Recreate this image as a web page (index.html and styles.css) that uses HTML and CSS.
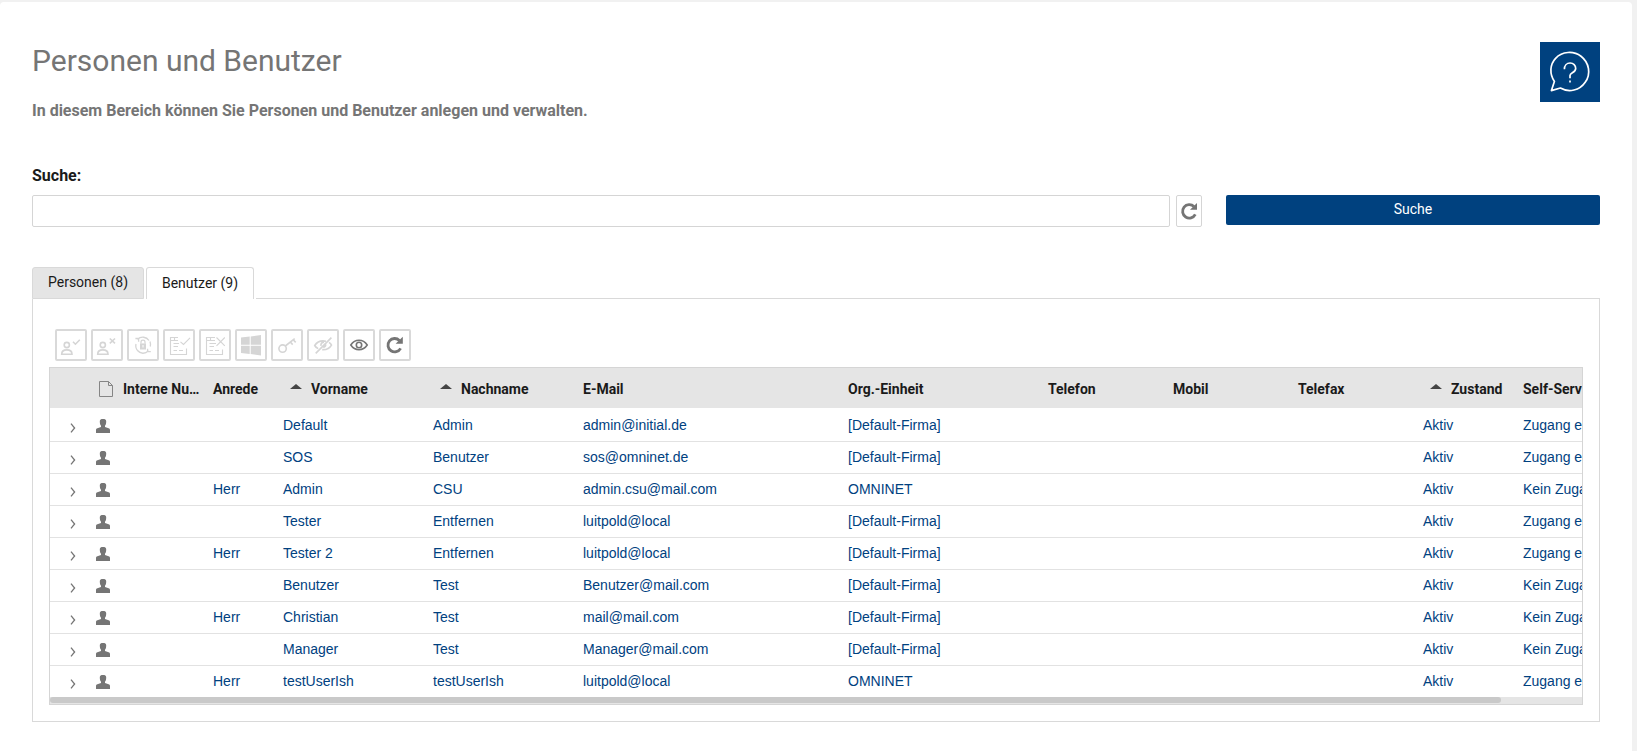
FILE: index.html
```
<!DOCTYPE html>
<html lang="de">
<head>
    <meta charset="UTF-8">
    <meta name="viewport" content="width=device-width, initial-scale=1.0">
    <title>Personen und Benutzer</title>
    <link rel="stylesheet" href="styles.css">
</head>
<body>
    <div class="page">
        <div class="header">
            <div class="intro">
                <h1>Personen und Benutzer</h1>
                <p>In diesem Bereich können Sie Personen und Benutzer anlegen und verwalten.</p>
            </div>
            <a class="help" title="Hilfe">
                <svg width="60" height="60" viewBox="0 0 60 60" fill="none" stroke="#fff" stroke-width="1.7">
                    <path d="M14.4 39.5C9.4 32 9.7 22.5 15.6 16.3C22.2 9.3 33.5 8.6 41 14.2C49.3 20.6 51.2 32 45.2 40.2C39.7 48.3 29 51 20.4 46L11.4 48.6Z" stroke-linejoin="round"/>
                    <path d="M24.4 27.2C24.4 23.5 26.8 21 30.1 21C33.4 21 35.7 23.5 35.7 26.4C35.7 30.6 30 30.7 30 33.4V36.3"/>
                    <path d="M30 38.4V40.6"/>
                </svg>
            </a>
        </div>

        <label class="search-label" for="search">Suche:</label>
        <div class="search">
            <input type="text" id="search">
            <button class="reset" id="reset">
                <svg width="24" height="30" viewBox="0 0 24 30"><path d="M17 10.6A6.7 6.7 0 1 0 18.3 18.4" fill="none" stroke="#757575" stroke-width="2.8"/><path d="M20 7V13.8H13Z" fill="#757575"/></svg>
            </button>
            <button class="submit">Suche</button>
        </div>

        <div class="tabs">
            <div class="tab">Personen (8)</div>
            <div class="tab active">Benutzer (9)</div>
            <div class="tab-line"></div>
        </div>
        <div class="panel">
            <div class="toolbar">
                <button disabled>
                    <svg viewBox="0 0 28 28"><circle cx="9.8" cy="14" r="2.6"/><path d="M4.7 23.2C4.7 19.8 7.2 18.9 9.8 18.9S15 19.8 15 23.2ZM16 10.8L18.4 13.2L22.8 8.8"/></svg>
                </button>
                <button disabled>
                    <svg viewBox="0 0 28 28"><circle cx="9.8" cy="14" r="2.6"/><path d="M4.7 23.2C4.7 19.8 7.2 18.9 9.8 18.9S15 19.8 15 23.2ZM16.8 7.5L22 12.3M22 7.5L16.8 12.3"/></svg>
                </button>
                <button disabled>
                    <svg viewBox="0 0 28 28"><path d="M8.5 8.5C12 5 17.5 5.7 20 9.5M7 13C6.4 15.5 7 18 9 20M19.5 19.8C16 23.2 11.5 23 8.5 19.5M21.3 15.5C21.8 13.5 21.5 12 21 10.5M6.4 7.5H9.6V10.7M21.8 20.6H18.6V17.8" stroke-width="1.3"/><path d="M12 12.4V11C12 8.5 16 8.5 16 11V12.4" stroke-width="1.2"/><path class="fill" d="M11 12.4H17V18.5H11Z"/><path d="M14 14V16.5" stroke="#fff" stroke-width="1"/></svg>
                </button>
                <button disabled>
                    <svg viewBox="0 0 28 28"><path d="M13 6.5H5.5V23.5H21.5V17.5M5.5 9.5H13M9.5 6.5V9.5M8.5 12.5H14M8.5 15.5H13M8.5 19.5H12M14 19.5H18" stroke-width="1.1"/><path d="M15.5 10.8L18.5 13.5L25 6.8" stroke-width="1.1"/></svg>
                </button>
                <button disabled>
                    <svg viewBox="0 0 28 28"><path d="M14 6.5H5.5V23.5H21.5V18.5M5.5 9.5H14M9.5 6.5V9.5M8.5 12.5H15M8.5 15.5H13M8.5 19.5H12M14 19.5H18" stroke-width="1.1"/><path d="M15.5 6.5L23.8 14.8M23.8 6.5L15.5 14.8" stroke-width="1.1"/></svg>
                </button>
                <button disabled>
                    <svg viewBox="0 0 28 28"><path class="fill" d="M4 6.6L12.7 5.6V13.8H4ZM13.7 5.4L24 4V13.8H13.7ZM4 14.8H12.7V22.9L4 21.9ZM13.7 14.8H24V24.4L13.7 23.1Z"/></svg>
                </button>
                <button disabled>
                    <svg viewBox="0 0 28 28"><circle cx="9.6" cy="17.6" r="3.7"/><path d="M12.3 15L21.7 7.6M17.3 11L19.7 13.6M20.2 8.8L22.7 11.4"/></svg>
                </button>
                <button disabled>
                    <svg viewBox="0 0 28 28"><path d="M22.4 6.6L6.7 22.4M9.2 17.6C7.5 16.8 6.3 15.6 5.7 14.5C8.2 10.6 12.7 9.3 17 10.2M12 14.8C11.6 12.6 13 11.1 15 11.1M20 11.4C21.3 12.3 22.2 13.3 22.5 14.1C20.4 17.7 17 18.9 13.2 18.6M16.8 13.5C16.7 15.3 15.6 16.2 14.2 16.3"/></svg>
                </button>
                <button>
                    <svg viewBox="0 0 28 28"><path d="M5.8 14C10 7.7 18 7.7 22.2 14C18 20.3 10 20.3 5.8 14Z"/><circle cx="14" cy="14" r="2.7"/></svg>
                </button>
                <button>
                    <svg viewBox="0 0 28 28"><path d="M18.4 9.4A6.7 6.7 0 1 0 19.6 17.4" stroke-width="2.8"/><path class="fill" d="M21.8 5.8V12.8H14.6Z"/></svg>
                </button>
            </div>

            <div class="grid">
                <table>
                    <colgroup>
                        <col class="c-expand"><col class="c-icon"><col class="c-number"><col class="c-title">
                        <col class="c-name"><col class="c-name"><col class="c-mail"><col class="c-org">
                        <col class="c-phone"><col class="c-phone"><col class="c-phone"><col class="c-state"><col class="c-access">
                    </colgroup>
                    <thead>
                        <tr>
                            <th></th>
                            <th><svg class="doc" width="16" height="18" viewBox="0 0 16 18"><path d="M1.5 1.5H10.5L14.5 5.5V16.5H1.5ZM10.5 1.5V5.5H14.5" fill="none" stroke="#858585"/></svg></th>
                            <th>Interne Nu…</th>
                            <th>Anrede</th>
                            <th class="sorted">Vorname</th>
                            <th class="sorted">Nachname</th>
                            <th>E-Mail</th>
                            <th>Org.-Einheit</th>
                            <th>Telefon</th>
                            <th>Mobil</th>
                            <th>Telefax</th>
                            <th class="sorted">Zustand</th>
                            <th>Self-Service</th>
                        </tr>
                    </thead>
                    <tbody id="users"></tbody>
                </table>
                <div class="scrollbar"><div class="thumb"></div></div>
            </div>
        </div>
    </div>
    <script>
        const users = [
            ["", "Default", "Admin", "admin@initial.de", "[Default-Firma]", "Zugang erlaubt"],
            ["", "SOS", "Benutzer", "sos@omninet.de", "[Default-Firma]", "Zugang erlaubt"],
            ["Herr", "Admin", "CSU", "admin.csu@mail.com", "OMNINET", "Kein Zugang"],
            ["", "Tester", "Entfernen", "luitpold@local", "[Default-Firma]", "Zugang erlaubt"],
            ["Herr", "Tester 2", "Entfernen", "luitpold@local", "[Default-Firma]", "Zugang erlaubt"],
            ["", "Benutzer", "Test", "Benutzer@mail.com", "[Default-Firma]", "Kein Zugang"],
            ["Herr", "Christian", "Test", "mail@mail.com", "[Default-Firma]", "Kein Zugang"],
            ["", "Manager", "Test", "Manager@mail.com", "[Default-Firma]", "Kein Zugang"],
            ["Herr", "testUserIsh", "testUserIsh", "luitpold@local", "OMNINET", "Zugang erlaubt"],
        ];

        const chevron = '<svg class="chevron" width="6" height="10" viewBox="0 0 6 10"><path d="M1 .7L4.6 5L1 9.3" fill="none" stroke="#757575" stroke-width="1.3"/></svg>';
        const person = '<svg class="person" width="14" height="14" viewBox="0 0 14 14"><path d="M3.8 2.2C3.8 .6 5 0 7 0S10.2 .6 10.2 2.2C10.2 4.8 9.7 5.8 9 6.7V8L12.6 9.2C13.7 9.6 14 10 14 11V14H0V11C0 10 .3 9.6 1.4 9.2L5 8V6.7C4.3 5.8 3.8 4.8 3.8 2.2Z" fill="#757575"/></svg>';

        document.getElementById('users').innerHTML = users.map(([title, first, last, mail, org, access]) => {
            const cells = [chevron, person, '', title, first, last, mail, org, '', '', '', 'Aktiv', access];
            return '<tr>' + cells.map(cell => `<td>${cell}</td>`).join('') + '</tr>';
        }).join('');

        document.getElementById('reset').addEventListener('click', () => {
            document.getElementById('search').value = '';
        });
    </script>
</body>
</html>
```

FILE: styles.css
```
* {
    box-sizing: border-box;
}

body {
    margin: 0;
    padding: 2px 5px 0 0;
    height: 751px;
    overflow: hidden;
    background: #f1f1f1;
    font-family: Roboto, sans-serif;
    color: #1a1a1a;
}

.page {
    height: 749px;
    padding: 40px 32px 0;
    background: #fff;
    border-radius: 4px 4px 0 0;
}

.header {
    display: flex;
    justify-content: space-between;
    height: 120px;
    color: #757575;
}

h1 {
    margin: 1px 0 0;
    font-size: 30px;
    font-weight: 400;
    line-height: 36px;
}

.intro p {
    margin: 22px 0 0;
    font-size: 16px;
    font-weight: 700;
    line-height: 20px;
}

.help {
    width: 60px;
    height: 60px;
    background: #00417f;
}

.help svg, button svg {
    display: block;
}

.search-label {
    display: block;
    height: 33px;
    padding-top: 4px;
    font-size: 16px;
    font-weight: 700;
    line-height: 20px;
}

.search {
    display: flex;
    align-items: flex-start;
    height: 72px;
}

.search input {
    flex: 1;
    height: 32px;
    border: 1px solid #d5d5d5;
    border-radius: 2px;
}

button {
    padding: 0;
    background: #fff;
    font-family: inherit;
}

.reset {
    width: 26px;
    height: 32px;
    margin: 0 24px 0 6px;
    border: 1px solid #d5d5d5;
    border-radius: 2px;
}

.submit {
    width: 374px;
    height: 30px;
    padding-bottom: 2px;
    border: none;
    border-radius: 2px;
    background: #00417f;
    color: #fff;
    font-size: 14px;
}

.tabs {
    display: flex;
    gap: 2px;
    height: 32px;
}

.tab {
    width: 112px;
    border: 1px solid #d9d9d9;
    border-radius: 3px 3px 0 0;
    background: #e5e5e5;
    font-size: 14px;
    line-height: 29px;
    text-align: center;
}

.tab.active {
    width: 108px;
    border-bottom: none;
    background: #fff;
    line-height: 31px;
}

.tab-line {
    flex: 1;
    border-bottom: 1px solid #d9d9d9;
}

.panel {
    height: 423px;
    padding: 30px 16px 0;
    border: 1px solid #d9d9d9;
    border-top: none;
}

.toolbar {
    display: flex;
    gap: 4px;
    height: 38px;
    padding-left: 6px;
}

.toolbar button {
    width: 32px;
    height: 32px;
    border: 2px solid #d9d9d9;
    border-radius: 2px;
    color: #757575;
}

.toolbar button:disabled {
    color: #d5d5d5;
}

.toolbar svg {
    width: 28px;
    height: 28px;
    fill: none;
    stroke: currentColor;
    stroke-width: 1.6;
}

.toolbar .fill {
    fill: currentColor;
    stroke: none;
}

.grid {
    overflow: hidden;
    height: 338px;
    border: 1px solid #d5d5d5;
}

table {
    width: 1615px;
    table-layout: fixed;
    border-collapse: separate;
    border-spacing: 0;
}

.c-expand { width: 38px; }
.c-icon { width: 27px; }
.c-number { width: 90px; }
.c-title { width: 70px; }
.c-name { width: 150px; }
.c-mail { width: 265px; }
.c-org { width: 200px; }
.c-phone { width: 125px; }
.c-state { width: 100px; }
.c-access { width: 150px; }

th {
    height: 40px;
    padding: 1px 0 0 8px;
    white-space: nowrap;
    background: #e5e5e5;
    font-size: 14px;
    font-weight: 700;
    text-align: left;
}

th:nth-child(2) {
    padding: 2px 0 0 10px;
}

.sorted::before {
    content: "";
    display: inline-block;
    margin: 0 9px 5px 7px;
    border: 5.5px solid transparent;
    border-width: 0 6px 5px;
    border-bottom-color: #444;
}

td {
    height: 32px;
    padding: 0 0 2px 8px;
    border-bottom: 1px solid #e2e2e2;
    font-family: "Liberation Sans", Arial, sans-serif;
    font-size: 14px;
    line-height: 16px;
    color: #00417f;
    white-space: nowrap;
}

tr:first-child td {
    height: 34px;
    padding-top: 2px;
}

tr:last-child td {
    height: 31px;
    border-bottom: none;
}

td:first-child {
    padding-left: 20px;
}

.doc, .chevron, .person {
    display: block;
}

.chevron {
    margin-top: 6px;
}

.person {
    margin-top: 3px;
}

.scrollbar {
    height: 7px;
    background: #e5e5e5;
}

.thumb {
    width: 1451px;
    height: 6px;
    border-radius: 3px;
    background: #c9c9c9;
}
```
